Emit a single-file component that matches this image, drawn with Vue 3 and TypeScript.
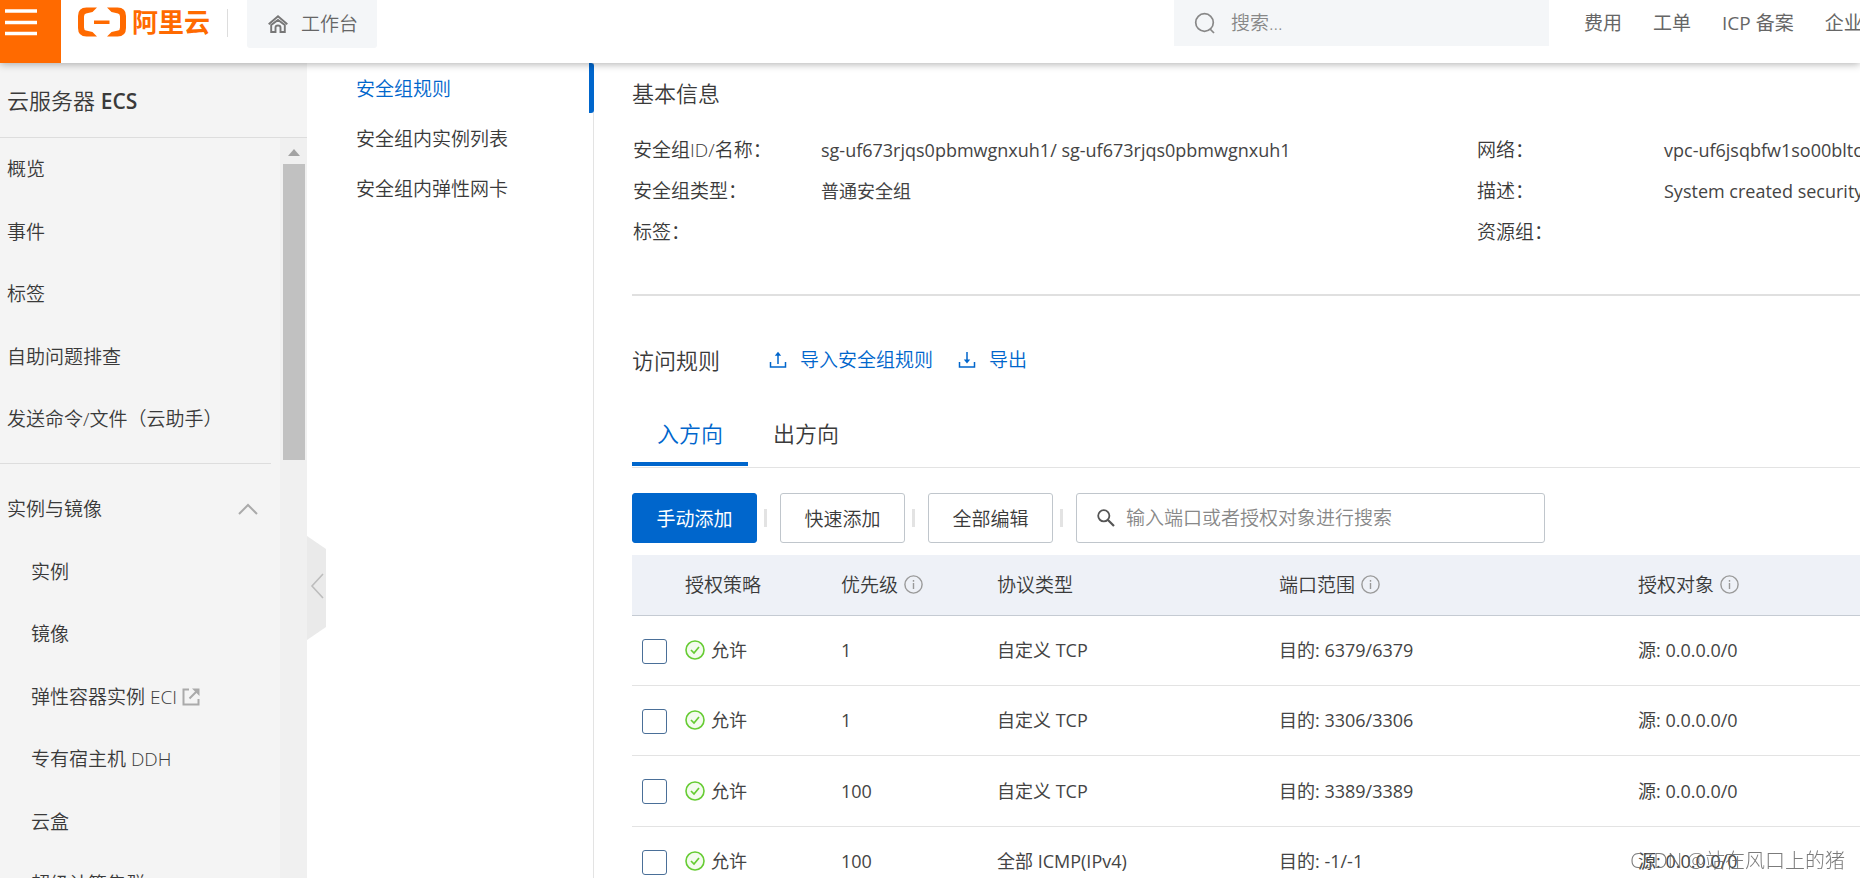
<script setup lang="ts">
import { ref } from 'vue'

interface NavItem {
  label: string
  external?: boolean
}

interface Rule {
  id: number
  priority: number
  protocol: string
  port: string
  source: string
}

const topLinks: string[] = ['费用', '工单', 'ICP 备案', '企业']
const sideLinks: string[] = ['概览', '事件', '标签', '自助问题排查', '发送命令/文件（云助手）']
const groupLinks: NavItem[] = [
  { label: '实例' },
  { label: '镜像' },
  { label: '弹性容器实例 ECI', external: true },
  { label: '专有宿主机 DDH' },
  { label: '云盒' },
  { label: '超级计算集群' },
]
const subLinks: string[] = ['安全组规则', '安全组内实例列表', '安全组内弹性网卡']
const tabs: string[] = ['入方向', '出方向']
const activeTab = ref(0)
const keyword = ref('')
const query = ref('')
const selected = ref<number[]>([])
const rules: Rule[] = [
  { id: 1, priority: 1, protocol: '自定义 TCP', port: '6379/6379', source: '0.0.0.0/0' },
  { id: 2, priority: 1, protocol: '自定义 TCP', port: '3306/3306', source: '0.0.0.0/0' },
  { id: 3, priority: 100, protocol: '自定义 TCP', port: '3389/3389', source: '0.0.0.0/0' },
  { id: 4, priority: 100, protocol: '全部 ICMP(IPv4)', port: '-1/-1', source: '0.0.0.0/0' },
]
</script>

<template>
  <div class="page">
    <header class="topbar">
      <button class="menu" type="button" aria-label="菜单">
        <svg width="32" height="28" viewBox="0 0 32 28"><path d="M0 2h32M0 13.5h32M0 24.500h32" stroke="#fff" stroke-width="3.400" /></svg>
      </button>
      <a class="logo" href="#">
        <svg width="48" height="30" viewBox="0 0 48 30" fill="#ff6a00">
          <path d="M19 .5H8.500Q0 .5 0 9v12q0 8.500 8.500 8.500H19L14.500 25 8 23.500Q6 23 6 20.500v-11Q6 7 8 6.500L14.500 5z" />
          <path d="M29 .5h10.500Q48 .5 48 9v12q0 8.500-8.500 8.500H29l4.500-4.500 6.500-1.500q2-.5 2-3v-11q0-2.500-2-3L33.500 5z" />
          <path d="M16 13.500h15.500V17H16z" />
        </svg>
        <span>阿里云</span>
      </a>
      <span class="bar-line"></span>
      <a class="workbench" href="#">
        <svg width="20" height="18" viewBox="0 0 20 18" fill="none" stroke="#777" stroke-width="1.900">
          <path d="M.7 9.300 10 1.300l9.300 8" />
          <path d="M3.200 10v7h4.300v-4.500q0-2 2.500-2t2.500 2V17h4.300v-7L10 5z" />
        </svg>
        <span>工作台</span>
      </a>
      <label class="search">
        <svg width="22" height="22" viewBox="0 0 22 22" fill="none" stroke="#888" stroke-width="1.700">
          <circle cx="10.500" cy="10.500" r="8.800" /><path d="m16 17 4 4" />
        </svg>
        <input v-model="query" type="text" placeholder="搜索..." aria-label="搜索" />
      </label>
      <nav class="top-links">
        <a v-for="l in topLinks" :key="l" href="#">{{ l }}</a>
      </nav>
    </header>

    <div class="body">
      <aside class="side">
        <h1>云服务器 <b>ECS</b></h1>
        <div class="side-scroll">
          <nav class="side-list">
            <ul>
              <li v-for="l in sideLinks" :key="l"><a href="#">{{ l }}</a></li>
            </ul>
            <ul class="group">
              <li class="group-head">
                <a href="#">实例与镜像</a>
                <svg width="20" height="12" viewBox="0 0 20 12" fill="none" stroke="#aaa" stroke-width="2"><path d="m1 11 9-9 9 9" /></svg>
              </li>
              <li v-for="l in groupLinks" :key="l.label" class="child">
                <a href="#">{{ l.label }}</a>
                <svg v-if="l.external" width="18" height="18" viewBox="0 0 18 18" fill="none" stroke="#aaa" stroke-width="2">
                  <path d="M7 1.500H1.500v15h15V11M7.500 10.500l7-7" /><path d="M10 .5h7.500V8z" fill="#aaa" stroke="none" />
                </svg>
              </li>
            </ul>
          </nav>
          <div class="track">
            <svg width="12" height="7" viewBox="0 0 12 7"><path d="M6 0 12 7H0z" fill="#a3a3a3" /></svg>
            <div class="thumb"></div>
          </div>
        </div>
        <button class="fold" type="button" aria-label="收起">
          <svg width="19" height="104" viewBox="0 0 19 104">
            <path d="M0 0 19 13v78L0 104z" fill="#eaeaea" /><path d="M16 38 5 50l11 12" fill="none" stroke="#bdbdbd" stroke-width="1.600" />
          </svg>
        </button>
      </aside>

      <nav class="subnav">
        <a v-for="(l, i) in subLinks" :key="l" href="#" :class="{ active: i === 0 }">{{ l }}</a>
      </nav>

      <main class="main">
        <h2>基本信息</h2>
        <dl class="info">
          <dt>安全组ID/名称：</dt><dd>sg-uf673rjqs0pbmwgnxuh1/ sg-uf673rjqs0pbmwgnxuh1</dd>
          <dt>网络：</dt><dd>vpc-uf6jsqbfw1so00bltc</dd>
          <dt>安全组类型：</dt><dd>普通安全组</dd>
          <dt>描述：</dt><dd>System created security</dd>
          <dt>标签：</dt><dd></dd>
          <dt>资源组：</dt><dd></dd>
        </dl>

        <div class="rules-head">
          <h2>访问规则</h2>
          <a href="#">
            <svg width="18" height="18" viewBox="0 0 18 18" fill="none" stroke="#06c" stroke-width="1.500"><path d="M1.500 11v5h15v-5M9 13V3" /><path d="M5.800 4.800 9 .8l3.200 4z" fill="#06c" stroke="none" /></svg>
            <span>导入安全组规则</span>
          </a>
          <a href="#">
            <svg width="18" height="18" viewBox="0 0 18 18" fill="none" stroke="#06c" stroke-width="1.500"><path d="M1.500 11v5h15v-5M9 1v9" /><path d="M5.800 8.500 9 12.500l3.200-4z" fill="#06c" stroke="none" /></svg>
            <span>导出</span>
          </a>
        </div>

        <div class="tabs" role="tablist">
          <button v-for="(t, i) in tabs" :key="t" type="button" role="tab" :aria-selected="activeTab === i" :class="{ active: activeTab === i }" @click="activeTab = i">{{ t }}</button>
        </div>

        <div class="tools">
          <button class="primary" type="button">手动添加</button>
          <i></i>
          <button type="button">快速添加</button>
          <i></i>
          <button type="button">全部编辑</button>
          <i></i>
          <label class="filter">
            <svg width="18" height="18" viewBox="0 0 18 18" fill="none" stroke="#555" stroke-width="1.800"><circle cx="6.800" cy="6.800" r="5.600" /><path d="m11 11 6 6" stroke-width="2.200" /></svg>
            <input v-model="keyword" type="text" placeholder="输入端口或者授权对象进行搜索" aria-label="搜索规则" />
          </label>
        </div>

        <table>
          <colgroup>
            <col class="c-check" /><col class="c-short" /><col class="c-short" /><col class="c-proto" /><col class="c-port" /><col />
          </colgroup>
          <thead>
            <tr>
              <th></th>
              <th>授权策略</th>
              <th v-for="h in ['优先级', '协议类型', '端口范围', '授权对象']" :key="h">
                <span class="cell">
                  {{ h }}
                  <svg v-if="h !== '协议类型'" width="19" height="19" viewBox="0 0 19 19" fill="none" stroke="#999" stroke-width="1.400"><circle cx="9.500" cy="9.500" r="8.600" /><path d="M9.500 8v6M9.500 5v1.700" /></svg>
                </span>
              </th>
            </tr>
          </thead>
          <tbody>
            <tr v-for="r in rules" :key="r.id">
              <td class="check"><input v-model="selected" type="checkbox" :value="r.id" :aria-label="`选择规则 ${r.id}`" /></td>
              <td>
                <span class="cell allow">
                  <svg width="20" height="20" viewBox="0 0 20 20" fill="none"><circle cx="10" cy="10" r="9" fill="#f4fbef" stroke="#6c3" stroke-width="1.600" /><path d="m6 10 3 3 5-6" stroke="#6c3" stroke-width="1.700" /></svg>
                  允许
                </span>
              </td>
              <td>{{ r.priority }}</td>
              <td>{{ r.protocol }}</td>
              <td>目的: {{ r.port }}</td>
              <td>源: {{ r.source }}</td>
            </tr>
          </tbody>
        </table>
      </main>
    </div>
    <div class="mark">CSDN @站在风口上的猪</div>
  </div>
</template>

<style>
body {
  margin: 0;
  overflow: hidden;
}
</style>

<style scoped>
.page {
  display: flex;
  flex-direction: column;
  height: 100vh;
  overflow: hidden;
  background: #fff;
  color: #3a3a3a;
  font: 360 19px/28px "Open Sans", "Noto Sans CJK SC", sans-serif;
  white-space: nowrap;
}
* {
  box-sizing: border-box;
}
a {
  color: inherit;
  text-decoration: none;
}
button,
input {
  font: inherit;
  color: inherit;
}
svg {
  display: block;
  flex: none;
}
h1,
h2 {
  margin: 0;
  font-size: 22px;
  font-weight: 360;
  line-height: 32px;
}
ul {
  margin: 0;
  padding: 0;
  list-style: none;
}
.topbar {
  position: relative;
  z-index: 2;
  display: flex;
  flex: none;
  align-items: flex-start;
  height: 63px;
  background: #fff;
  box-shadow: 0 1px 8px rgba(0, 0, 0, 0.32);
  color: #666;
}
.menu {
  flex: none;
  width: 61px;
  height: 63px;
  padding: 0 0 17px 5px;
  border: 0;
  background: #ff6a00;
}
.logo {
  display: flex;
  align-items: center;
  gap: 6px;
  height: 44px;
  margin-left: 17px;
  color: #ff6a00;
  font-size: 26px;
  font-weight: 700;
}
.bar-line {
  width: 1px;
  height: 28px;
  margin: 9px 19px 0 17px;
  background: #ddd;
}
.workbench {
  display: flex;
  flex: none;
  align-items: center;
  gap: 13px;
  width: 130px;
  height: 48px;
  padding-left: 21px;
  border-radius: 0 0 3px 3px;
  background: #f4f6f8;
}
.search {
  display: flex;
  flex: none;
  align-items: center;
  gap: 15px;
  width: 375px;
  height: 46px;
  margin-left: auto;
  padding-left: 20px;
  background: #f4f6f8;
}
.search input,
.filter input {
  flex: 1;
  min-width: 0;
  padding: 0;
  border: 0;
  outline: 0;
  background: none;
}
input::placeholder {
  color: #888;
  opacity: 1;
}
.top-links {
  display: flex;
  flex: none;
  gap: 31px;
  width: 276px;
  margin-left: 35px;
  font-weight: 380;
  line-height: 46px;
}
.body {
  display: flex;
  flex: 1;
  min-height: 0;
}
.side {
  position: relative;
  display: flex;
  flex: none;
  flex-direction: column;
  width: 307px;
  background: #f4f4f4;
}
.side h1 {
  height: 75px;
  padding: 21px 0 0 7px;
  border-bottom: 1px solid #ddd;
}
.side h1 b {
  font-size: 21px;
  font-weight: 600;
}
.side-scroll {
  display: flex;
  flex: 1;
  min-height: 0;
}
.side-list {
  flex: 1;
  overflow: hidden;
}
.side-list ul {
  margin-right: 9px;
}
.side-list li {
  display: flex;
  align-items: center;
  height: 62px;
  padding-left: 7px;
}
.side-list li:nth-child(even) {
  height: 63px;
}
.side-list .group {
  margin-top: 13px;
  padding-top: 14px;
  border-top: 1px solid #ddd;
}
.side-list .group-head {
  justify-content: space-between;
  padding-right: 13px;
}
.side-list .child {
  gap: 5px;
  padding-left: 31px;
}
.track {
  display: flex;
  flex-direction: column;
  align-items: center;
  gap: 8px;
  width: 27px;
  padding-top: 11px;
  background: #f0f0f0;
}
.thumb {
  width: 22px;
  height: 296px;
  background: #c1c1c1;
}
.fold {
  position: absolute;
  top: 473px;
  left: 100%;
  z-index: 1;
  padding: 0;
  border: 0;
  background: none;
}
.subnav {
  display: flex;
  flex: none;
  flex-direction: column;
  width: 287px;
  border-right: 1px solid #e3e3e3;
}
.subnav a {
  height: 50px;
  margin-right: -1px;
  padding-left: 49px;
  line-height: 52px;
}
.subnav .active {
  border-right: 5px solid #06c;
  border-radius: 3px;
  color: #06c;
}
.main {
  flex: 1;
  min-width: 0;
  padding: 14px 0 0 38px;
  overflow: hidden;
}
.info {
  display: grid;
  grid-template-columns: 188px 656px 187px 1fr;
  grid-auto-rows: 41px;
  align-items: center;
  margin: 0;
  padding: 20px 0 42px 1px;
  border-bottom: 2px solid #e0e0e0;
}
.info dd {
  margin: 0;
  color: #444;
  font-size: 18px;
  font-weight: 380;
}
.rules-head {
  display: flex;
  align-items: center;
  gap: 25px;
  margin-top: 48px;
}
.rules-head h2 {
  margin-right: 24px;
}
.rules-head a {
  display: flex;
  align-items: center;
  gap: 13px;
  color: #06c;
}
.tabs {
  display: flex;
  height: 92px;
  border-bottom: 1px solid #e3e3e3;
}
.tabs button {
  width: 116px;
  height: 90px;
  padding: 28px 0 0;
  border: 0;
  border-bottom: 4px solid transparent;
  background: none;
  font-size: 22px;
}
.tabs .active {
  border-bottom-color: #06c;
  color: #06c;
}
.tools {
  display: flex;
  align-items: center;
  margin: 25px 0 12px;
}
.tools button {
  width: 125px;
  height: 50px;
  padding: 2px 0 0;
  border: 1px solid #c0c6cc;
  border-radius: 3px;
  background: #fff;
}
.tools .primary {
  border-color: #06c;
  background: #06c;
  color: #fff;
  font-weight: 400;
}
.tools i {
  width: 3px;
  height: 18px;
  margin: 0 13px 0 7px;
  background: #e3e3e3;
}
.filter {
  display: flex;
  align-items: center;
  gap: 11px;
  width: 469px;
  height: 50px;
  padding: 0 20px;
  border: 1px solid #c0c6cc;
  border-radius: 3px;
}
table {
  width: 100%;
  border-collapse: collapse;
  table-layout: fixed;
}
.c-check {
  width: 53px;
}
.c-short {
  width: 156px;
}
.c-proto {
  width: 282px;
}
.c-port {
  width: 359px;
}
th,
td {
  padding: 0;
  text-align: left;
  font-weight: 360;
}
th {
  height: 60px;
  border-bottom: 1px solid #c5cbd3;
  background: #eef1f7;
}
td {
  height: 70px;
  border-bottom: 1px solid #e3e3e3;
  color: #444;
  font-size: 18px;
  font-weight: 380;
}
tbody tr:nth-child(3) td {
  height: 71px;
}
.cell {
  display: flex;
  align-items: center;
  gap: 6px;
}
.check input {
  display: block;
  width: 25px;
  height: 25px;
  margin: 2px 0 0 10px;
  border: 1px solid #4a6f98;
  border-radius: 3px;
  background: #fff;
  appearance: none;
}
.check input:checked {
  background: #06c;
}
.mark {
  position: fixed;
  right: 15px;
  bottom: 3px;
  z-index: 3;
  color: rgba(100, 100, 100, 0.85);
  font-size: 20px;
  font-weight: 300;
}
</style>
